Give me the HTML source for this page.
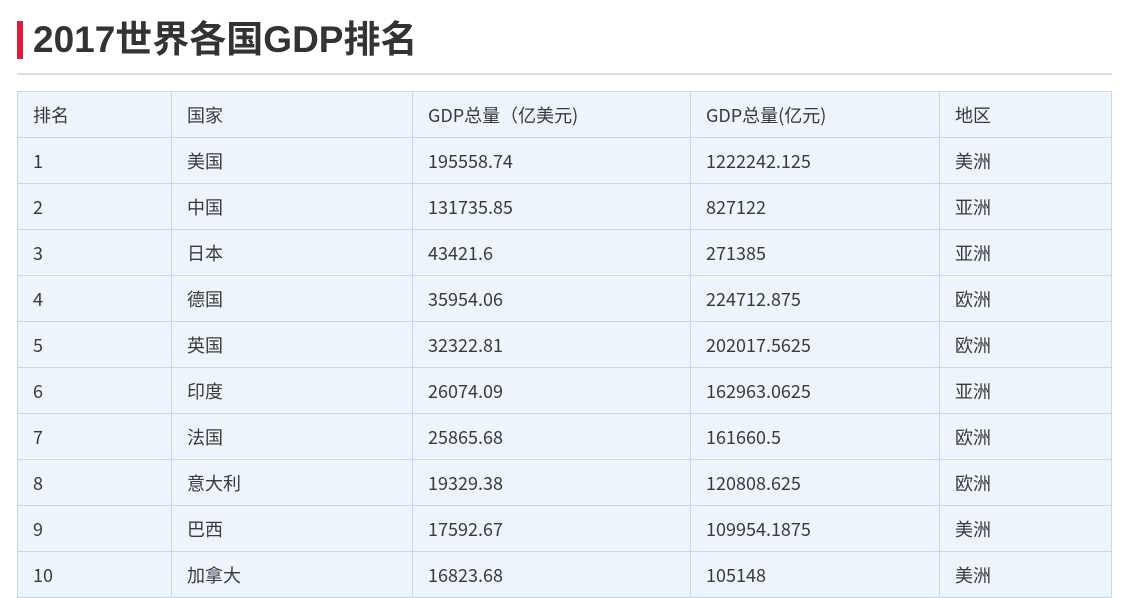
<!DOCTYPE html>
<html><head><meta charset="utf-8"><style>
body{margin:0;background:#fff;font-family:"Liberation Sans","Noto Sans CJK SC",sans-serif;color:#333;}
.bar{position:absolute;left:17px;top:21px;width:6px;height:38px;background:#dc1e3c;}
h1{position:absolute;left:33px;top:14px;margin:0;font-size:37px;line-height:52px;font-weight:bold;color:#333;}
.line{position:absolute;left:17px;top:73px;width:1095px;height:2px;background:#ddd;}
table{position:absolute;left:17px;top:91px;border-collapse:collapse;width:1095px;background:#edf4fc;font-size:18px;font-family:"Noto Sans CJK SC",sans-serif;}
td{border:1px solid #c6d8ec;height:46px;padding:0 0 0 15px;box-sizing:border-box;color:#3a3a3a;line-height:20px;vertical-align:middle;}
</style></head><body>
<div class="bar"></div><h1>2017世界各国GDP排名</h1><div class="line"></div>
<table>
<colgroup><col style="width:154px"><col style="width:241px"><col style="width:278px"><col style="width:249px"><col></colgroup>
<tr><td>排名</td><td>国家</td><td>GDP总量（亿美元)</td><td>GDP总量(亿元)</td><td>地区</td></tr>
<tr><td>1</td><td>美国</td><td>195558.74</td><td>1222242.125</td><td>美洲</td></tr>
<tr><td>2</td><td>中国</td><td>131735.85</td><td>827122</td><td>亚洲</td></tr>
<tr><td>3</td><td>日本</td><td>43421.6</td><td>271385</td><td>亚洲</td></tr>
<tr><td>4</td><td>德国</td><td>35954.06</td><td>224712.875</td><td>欧洲</td></tr>
<tr><td>5</td><td>英国</td><td>32322.81</td><td>202017.5625</td><td>欧洲</td></tr>
<tr><td>6</td><td>印度</td><td>26074.09</td><td>162963.0625</td><td>亚洲</td></tr>
<tr><td>7</td><td>法国</td><td>25865.68</td><td>161660.5</td><td>欧洲</td></tr>
<tr><td>8</td><td>意大利</td><td>19329.38</td><td>120808.625</td><td>欧洲</td></tr>
<tr><td>9</td><td>巴西</td><td>17592.67</td><td>109954.1875</td><td>美洲</td></tr>
<tr><td>10</td><td>加拿大</td><td>16823.68</td><td>105148</td><td>美洲</td></tr>
</table>
</body></html>
